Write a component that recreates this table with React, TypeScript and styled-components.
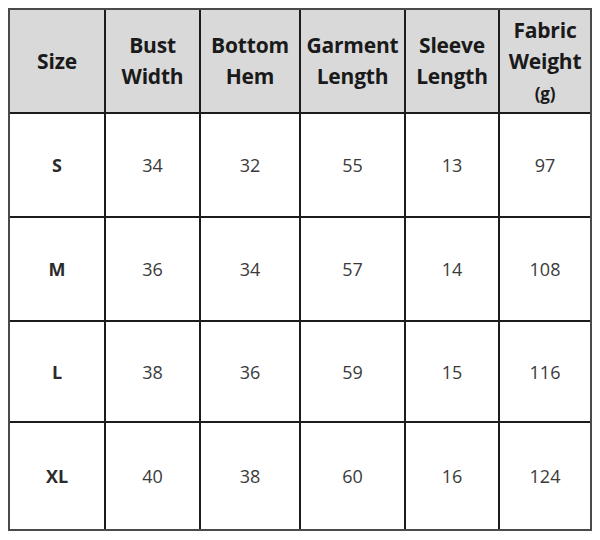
import React from "react";
import styled, { createGlobalStyle } from "styled-components";

const Global = createGlobalStyle`
  html, body { margin: 0; padding: 0; background: #ffffff; }
  body { padding: 8px; font-family: "Open Sans", "Liberation Sans", sans-serif; }
`;

const Grid = styled.div`
  display: grid;
  width: 584px;
  box-sizing: border-box;
  grid-template-columns: 94px 93px 98px 103px 92px 90px;
  grid-template-rows: 102px 102px 102px 99px 106px;
  gap: 2px;
  background: #1c1c1c;
  border: 2px solid #4a4a4a;
`;

const HeadCell = styled.div`
  background: #d9d9d9;
  display: flex;
  flex-direction: column;
  align-items: center;
  justify-content: center;
  text-align: center;
  font-weight: 700;
  font-size: 21px;
  line-height: 31px;
  letter-spacing: -0.2px;
  color: #1a1a1a;
  white-space: nowrap;
`;

const Unit = styled.span`
  font-size: 17px;
  line-height: 28px;
`;

const Cell = styled.div<{ $label?: boolean }>`
  background: #ffffff;
  display: flex;
  align-items: center;
  justify-content: center;
  font-size: 18px;
  font-weight: ${(p) => (p.$label ? 700 : 400)};
  color: ${(p) => (p.$label ? "#2b2b2b" : "#3a3a3a")};
`;

const headers: React.ReactNode[] = [
  <>Size</>,
  <>Bust<br />Width</>,
  <>Bottom<br />Hem</>,
  <>Garment<br />Length</>,
  <>Sleeve<br />Length</>,
  <>Fabric<br />Weight<br /><Unit>(g)</Unit></>,
];

const rows: (string | number)[][] = [
  ["S", 34, 32, 55, 13, 97],
  ["M", 36, 34, 57, 14, 108],
  ["L", 38, 36, 59, 15, 116],
  ["XL", 40, 38, 60, 16, 124],
];

export default function App() {
  return (
    <>
      <Global />
      <Grid>
        {headers.map((h, i) => (
          <HeadCell key={i}>
            <div>{h}</div>
          </HeadCell>
        ))}
        {rows.map((r) =>
          r.map((v, j) => (
            <Cell key={`${r[0]}-${j}`} $label={j === 0}>
              {v}
            </Cell>
          ))
        )}
      </Grid>
    </>
  );
}
